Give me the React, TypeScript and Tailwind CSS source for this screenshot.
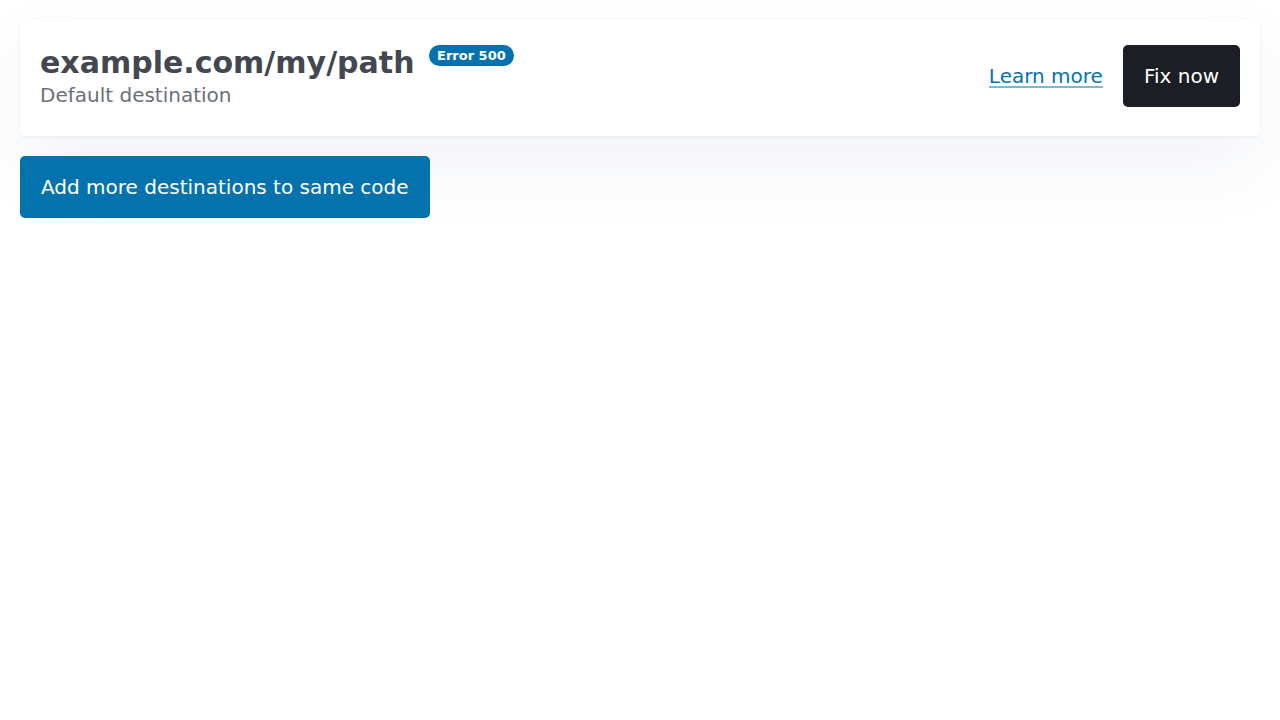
export default function App() {
  return (
    <div className="min-h-screen bg-white p-5 font-['DejaVu_Sans',sans-serif]">
      <div className="flex flex-col items-start gap-5">
        <div className="flex w-full items-center justify-between rounded-md bg-white px-5 pt-[25px] pb-[27px] shadow-[0_1px_4px_rgba(40,50,100,0.06),0_30px_80px_rgba(40,50,100,0.06)]">
          <div className="flex flex-col">
            <div className="flex items-start gap-[14px]">
              <h1 className="text-3xl font-bold leading-9 text-[#434750]">example.com/my/path</h1>
              <span className="rounded-full bg-[#0473ad] px-[8.5px] text-[13px] font-bold leading-[21px] text-white">
                Error 500
              </span>
            </div>
            <p className="text-xl leading-7 text-[#6b6f7a]">Default destination</p>
          </div>
          <div className="mb-[2px] flex items-center gap-5">
            <a
              href="#"
              className="text-xl leading-7 text-[#0473ad] underline decoration-[#7ab8d8] decoration-2 underline-offset-[3px]"
            >
              Learn more
            </a>
            <button type="button" className="rounded-[5px] bg-[#1b1e25] px-[21px] py-[17px] text-xl leading-7 text-white">
              Fix now
            </button>
          </div>
        </div>
        <button type="button" className="rounded-[5px] bg-[#0473ad] px-[21px] py-[17px] text-xl leading-7 text-white">
          Add more destinations to same code
        </button>
      </div>
    </div>
  );
}
